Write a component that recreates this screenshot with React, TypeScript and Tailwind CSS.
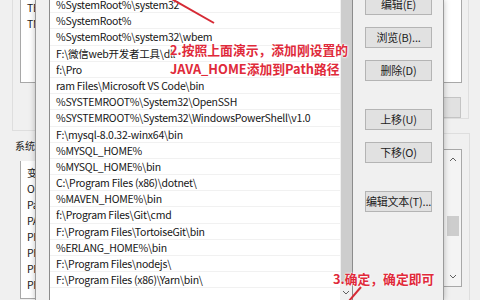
import React from "react";

const items = [
  "%SystemRoot%\\system32",
  "%SystemRoot%",
  "%SystemRoot%\\system32\\wbem",
  "F:\\微信web开发者工具\\dll",
  "f:\\Pro",
  "ram Files\\Microsoft VS Code\\bin",
  "%SYSTEMROOT%\\System32\\OpenSSH",
  "%SYSTEMROOT%\\System32\\WindowsPowerShell\\v1.0",
  "F:\\mysql-8.0.32-winx64\\bin",
  "%MYSQL_HOME%",
  "%MYSQL_HOME%\\bin",
  "C:\\Program Files (x86)\\dotnet\\",
  "%MAVEN_HOME%\\bin",
  "f:\\Program Files\\Git\\cmd",
  "F:\\Program Files\\TortoiseGit\\bin",
  "%ERLANG_HOME%\\bin",
  "F:\\Program Files\\nodejs\\",
  "F:\\Program Files (x86)\\Yarn\\bin\\",
];

const sysItems = ["变", "OS", "Pa", "PA", "PH", "PF", "PF", "PF"];

const font = { fontFamily: '"Noto Sans CJK SC", "Noto Sans", sans-serif' };

function Btn({ label, className = "" }: { label: string; className?: string }) {
  return (
    <div
      className={`w-[67px] h-[21px] shrink-0 bg-[#e1e1e1] border border-[#b4b4b4] flex items-center justify-center text-[11px] tracking-[-0.2px] whitespace-nowrap text-[#222] ${className}`}
    >
      {label}
    </div>
  );
}

export default function App() {
  return (
    <div
      className="relative w-[480px] h-[300px] overflow-hidden bg-[#f0f0f0] flex"
      style={font}
    >
      {/* left background window */}
      <div className="w-[35px] shrink-0 flex flex-col overflow-hidden">
        <div className="ml-[12px] h-[131px] border-l border-b border-[#dedede] flex flex-col">
          <div className="ml-[7px] h-[83px] bg-white border-l border-b border-[#a8a8a8] pl-[6px] text-[10.5px] tracking-[-0.3px] text-[#222] leading-[16px] flex flex-col whitespace-nowrap overflow-hidden">
            <span>TE</span>
            <span>TM</span>
          </div>
        </div>
        <div className="pl-[15px] mt-[8px] text-[10px] leading-[14px] text-[#222] whitespace-nowrap">系统</div>
        <div className="ml-[20px] mt-[8px] h-[138px] bg-white border-l border-b border-[#a8a8a8] pl-[6px] pt-[4px] text-[10.5px] tracking-[-0.3px] text-[#222] leading-[16px] flex flex-col overflow-hidden whitespace-nowrap">
          {sysItems.map((s, i) => (
            <span key={i}>{s}</span>
          ))}
        </div>
      </div>

      {/* front dialog */}
      <div className="w-[409px] shrink-0 bg-[#f0f0f0] border-l border-r border-[#9a9a9a] flex shadow-[0_0_6px_rgba(0,0,0,0.25)] z-10">
        <div className="ml-[13px] w-[304px] h-[300px] bg-white border-l border-r border-[#8c8c8c] flex overflow-hidden">
          <div className="flex-1 -mt-[3px] flex flex-col overflow-hidden">
            {items.map((t, i) => (
              <div
                key={i}
                className="h-[16.2px] shrink-0 border-b border-[#f1f1f1] pl-[6px] text-[10.5px] tracking-[-0.25px] leading-[16px] text-[#161616] whitespace-nowrap"
              >
                {t}
              </div>
            ))}
          </div>
          <div className="w-[12px] bg-[#f0f0f0] flex flex-col items-center">
            <div className="w-[11px] h-[284px] bg-[#cdcdcd]" />
            <div className="flex-1 flex items-center justify-center">
              <svg width="8" height="5" viewBox="0 0 8 5">
                <path d="M1 1 L4 4 L7 1" stroke="#606060" strokeWidth="1" fill="none" />
              </svg>
            </div>
          </div>
        </div>
        <div className="ml-[12px] flex flex-col -mt-[6px]">
          <Btn label="编辑(E)" />
          <Btn label="浏览(B)..." className="mt-[12px]" />
          <Btn label="删除(D)" className="mt-[12px]" />
          <Btn label="上移(U)" className="mt-[28px]" />
          <Btn label="下移(O)" className="mt-[12px]" />
          <Btn label="编辑文本(T)..." className="mt-[28px]" />
        </div>
      </div>

      {/* right background window */}
      <div className="flex-1 flex flex-col">
        <div className="w-[25px] h-[131px] border-r border-b border-[#dedede] flex flex-col">
          <div className="w-[18px] h-[83px] bg-white border-r border-b border-[#a8a8a8]" />
          <div className="mt-[14px] w-[17px] h-[21px] bg-[#e1e1e1] border border-[#c4c4c4] border-l-0" />
        </div>
        <div className="mt-[14px] w-[26px] h-[200px] border-r border-t border-[#dedede] flex flex-col">
          <div className="mt-[15px] w-[18px] h-[138px] bg-white border-r border-b border-t border-[#a8a8a8] flex flex-col items-center">
            <div className="w-[17px] h-full bg-[#f4f4f4] flex flex-col items-center">
              <svg className="mt-[7px]" width="8" height="5" viewBox="0 0 8 5">
                <path d="M1 4 L4 1 L7 4" stroke="#606060" strokeWidth="1" fill="none" />
              </svg>
              <div className="mt-[54px] w-[12px] h-[20px] bg-[#cdcdcd]" />
              <svg className="mt-[38px]" width="8" height="5" viewBox="0 0 8 5">
                <path d="M1 1 L4 4 L7 1" stroke="#606060" strokeWidth="1" fill="none" />
              </svg>
            </div>
          </div>
        </div>
      </div>

      {/* annotations */}
      <svg className="absolute left-0 top-0 z-20 pointer-events-none" width="480" height="300">
        <line x1="170" y1="-2" x2="214" y2="23" stroke="#d62a35" strokeWidth="2" />
        <line x1="349" y1="301" x2="361" y2="287" stroke="#d62a35" strokeWidth="2" />
      </svg>
      <div className="absolute left-[170px] top-[40px] z-20 text-[12.8px] leading-[19px] font-bold text-[#e02a3a] whitespace-nowrap [text-shadow:0_0_2px_#fff,0_0_2px_#fff,0_0_3px_#fff]">
        <div>2.按照上面演示，添加刚设置的</div>
        <div>JAVA_HOME添加到Path路径</div>
      </div>
      <div className="absolute left-[333px] top-[270px] z-20 text-[12.8px] leading-[18px] font-bold text-[#e02a3a] whitespace-nowrap [text-shadow:0_0_2px_#fff,0_0_2px_#fff]">
        3.确定，确定即可
      </div>
    </div>
  );
}
